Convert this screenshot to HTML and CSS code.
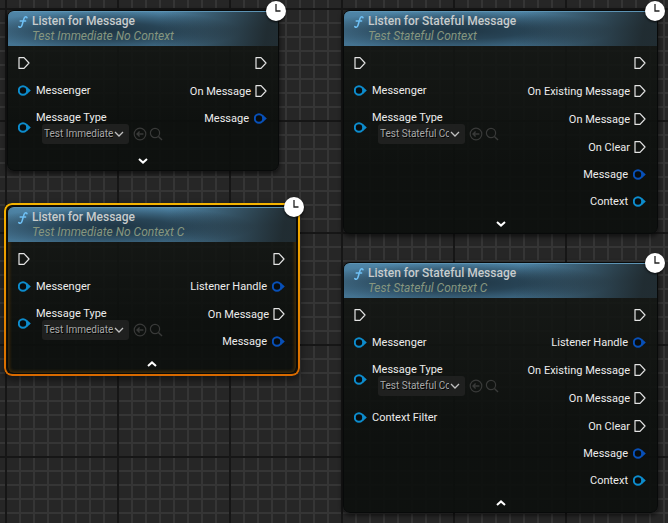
FILE: index.html
```
<!DOCTYPE html>
<html lang="en">
<head>
<meta charset="utf-8">
<title>Blueprint Graph</title>
<link rel="stylesheet" href="styles.css">
</head>
<body>
<svg class="defs" aria-hidden="true">
  <symbol id="exec" viewBox="0 0 12 12"><path d="M1 .6H6L11 6 6 11.4H1Z" fill="none" stroke="currentColor" stroke-width="1.2" stroke-linejoin="round"/></symbol>
  <symbol id="data" viewBox="0 0 13 12"><path d="M9 2 12.8 5.5 9 9Z" fill="currentColor"/><circle cx="5" cy="5.5" r="4.2" fill="#080c0e" stroke="currentColor" stroke-width="2"/></symbol>
  <symbol id="fn" viewBox="0 0 12 14"><path d="M10 2.8C9.6 1.2 7.7 1.5 7 3.6L5 10.2C4.4 12.2 3 12.8 1.8 11.6M3.2 6H8.6" fill="none" stroke="currentColor" stroke-width="1.5" stroke-linecap="round"/></symbol>
  <symbol id="clock" viewBox="0 0 22 22"><circle cx="11" cy="11" r="10" fill="#fff"/><path d="M11 4V11H15.5" fill="none" stroke="#222" stroke-width="1.3"/></symbol>
  <symbol id="down" viewBox="0 0 10 6"><path d="M1 1 5 5 9 1" fill="none" stroke="currentColor" stroke-width="1.3"/></symbol>
  <symbol id="fold" viewBox="0 0 10 6"><path d="M1 1 5 4.6 9 1" fill="none" stroke="currentColor" stroke-width="2"/></symbol>
  <symbol id="use" viewBox="0 0 14 14"><circle cx="7" cy="7" r="5.8" fill="none" stroke="currentColor" stroke-width="1.2"/><path d="M10.4 7H4M6.6 4.4 4 7l2.6 2.6" fill="none" stroke="currentColor" stroke-width="1.4"/></symbol>
  <symbol id="find" viewBox="0 0 14 14"><circle cx="6" cy="6" r="4.6" fill="none" stroke="currentColor" stroke-width="1.2"/><path d="M9.4 9.4 13 13" stroke="currentColor" stroke-width="1.4"/></symbol>
</svg>

<main class="graph">
  <article class="node node-a">
    <header class="head">
      <svg class="fn"><use href="#fn"/></svg>
      <div><h2>Listen for Message</h2><p>Test Immediate No Context</p></div>
    </header>
    <svg class="clock"><use href="#clock"/></svg>
    <div class="pins">
      <ul class="inputs">
        <li class="row exec"><svg class="pin"><use href="#exec"/></svg></li>
        <li class="row object"><svg class="pin"><use href="#data"/></svg><span>Messenger</span></li>
        <li class="row object typed"><svg class="pin"><use href="#data"/></svg>
          <div class="field"><label for="type-a">Message Type</label>
            <div class="picker"><span class="combo"><select id="type-a"><option>Test Immediate</option></select><svg><use href="#down"/></svg></span>
            <button aria-label="Use selected asset"><svg><use href="#use"/></svg></button><button aria-label="Browse"><svg><use href="#find"/></svg></button></div></div></li>
      </ul>
      <ul class="outputs">
        <li class="row exec"><svg class="pin"><use href="#exec"/></svg></li>
        <li class="row exec"><span>On Message</span><svg class="pin"><use href="#exec"/></svg></li>
        <li class="row struct"><span>Message</span><svg class="pin"><use href="#data"/></svg></li>
      </ul>
    </div>
    <button class="fold" aria-label="Expand"><svg><use href="#fold"/></svg></button>
  </article>

  <article class="node node-b selected">
    <header class="head">
      <svg class="fn"><use href="#fn"/></svg>
      <div><h2>Listen for Message</h2><p>Test Immediate No Context C</p></div>
    </header>
    <svg class="clock"><use href="#clock"/></svg>
    <div class="pins">
      <ul class="inputs">
        <li class="row exec"><svg class="pin"><use href="#exec"/></svg></li>
        <li class="row object"><svg class="pin"><use href="#data"/></svg><span>Messenger</span></li>
        <li class="row object typed"><svg class="pin"><use href="#data"/></svg>
          <div class="field"><label for="type-b">Message Type</label>
            <div class="picker"><span class="combo"><select id="type-b"><option>Test Immediate</option></select><svg><use href="#down"/></svg></span>
            <button aria-label="Use selected asset"><svg><use href="#use"/></svg></button><button aria-label="Browse"><svg><use href="#find"/></svg></button></div></div></li>
      </ul>
      <ul class="outputs">
        <li class="row exec"><svg class="pin"><use href="#exec"/></svg></li>
        <li class="row struct"><span>Listener Handle</span><svg class="pin"><use href="#data"/></svg></li>
        <li class="row exec"><span>On Message</span><svg class="pin"><use href="#exec"/></svg></li>
        <li class="row struct"><span>Message</span><svg class="pin"><use href="#data"/></svg></li>
      </ul>
    </div>
    <button class="fold open" aria-label="Collapse"><svg><use href="#fold"/></svg></button>
  </article>

  <article class="node node-c">
    <header class="head">
      <svg class="fn"><use href="#fn"/></svg>
      <div><h2>Listen for Stateful Message</h2><p>Test Stateful Context</p></div>
    </header>
    <svg class="clock"><use href="#clock"/></svg>
    <div class="pins">
      <ul class="inputs">
        <li class="row exec"><svg class="pin"><use href="#exec"/></svg></li>
        <li class="row object"><svg class="pin"><use href="#data"/></svg><span>Messenger</span></li>
        <li class="row object typed"><svg class="pin"><use href="#data"/></svg>
          <div class="field"><label for="type-c">Message Type</label>
            <div class="picker"><span class="combo"><select id="type-c"><option>Test Stateful Context</option></select><svg><use href="#down"/></svg></span>
            <button aria-label="Use selected asset"><svg><use href="#use"/></svg></button><button aria-label="Browse"><svg><use href="#find"/></svg></button></div></div></li>
      </ul>
      <ul class="outputs">
        <li class="row exec"><svg class="pin"><use href="#exec"/></svg></li>
        <li class="row exec"><span>On Existing Message</span><svg class="pin"><use href="#exec"/></svg></li>
        <li class="row exec"><span>On Message</span><svg class="pin"><use href="#exec"/></svg></li>
        <li class="row exec"><span>On Clear</span><svg class="pin"><use href="#exec"/></svg></li>
        <li class="row struct"><span>Message</span><svg class="pin"><use href="#data"/></svg></li>
        <li class="row object"><span>Context</span><svg class="pin"><use href="#data"/></svg></li>
      </ul>
    </div>
    <button class="fold" aria-label="Expand"><svg><use href="#fold"/></svg></button>
  </article>

  <article class="node node-d">
    <header class="head">
      <svg class="fn"><use href="#fn"/></svg>
      <div><h2>Listen for Stateful Message</h2><p>Test Stateful Context C</p></div>
    </header>
    <svg class="clock"><use href="#clock"/></svg>
    <div class="pins">
      <ul class="inputs">
        <li class="row exec"><svg class="pin"><use href="#exec"/></svg></li>
        <li class="row object"><svg class="pin"><use href="#data"/></svg><span>Messenger</span></li>
        <li class="row object typed"><svg class="pin"><use href="#data"/></svg>
          <div class="field"><label for="type-d">Message Type</label>
            <div class="picker"><span class="combo"><select id="type-d"><option>Test Stateful Context</option></select><svg><use href="#down"/></svg></span>
            <button aria-label="Use selected asset"><svg><use href="#use"/></svg></button><button aria-label="Browse"><svg><use href="#find"/></svg></button></div></div></li>
        <li class="row object"><svg class="pin"><use href="#data"/></svg><span>Context Filter</span></li>
      </ul>
      <ul class="outputs">
        <li class="row exec"><svg class="pin"><use href="#exec"/></svg></li>
        <li class="row struct"><span>Listener Handle</span><svg class="pin"><use href="#data"/></svg></li>
        <li class="row exec"><span>On Existing Message</span><svg class="pin"><use href="#exec"/></svg></li>
        <li class="row exec"><span>On Message</span><svg class="pin"><use href="#exec"/></svg></li>
        <li class="row exec"><span>On Clear</span><svg class="pin"><use href="#exec"/></svg></li>
        <li class="row struct"><span>Message</span><svg class="pin"><use href="#data"/></svg></li>
        <li class="row object"><span>Context</span><svg class="pin"><use href="#data"/></svg></li>
      </ul>
    </div>
    <button class="fold open" aria-label="Collapse"><svg><use href="#fold"/></svg></button>
  </article>
</main>
</body>
</html>
```
FILE: styles.css
```
* { box-sizing: border-box; margin: 0; padding: 0; }
body { font-family: Roboto, "Liberation Sans", sans-serif; font-size: 11px; color: #ececec; }
button { border: 0; background: none; color: inherit; display: flex; align-items: center; justify-content: center; }
ul { list-style: none; }
svg { display: block; flex: none; }
.defs { position: absolute; width: 0; height: 0; }

/* major grid lines every 112px, minor every 14px */
.graph {
  position: relative;
  min-height: 100vh;
  overflow: hidden;
  background-color: #262626;
  background-image:
    linear-gradient(90deg, #161616 2px, transparent 2px),
    linear-gradient(#161616 2px, transparent 2px),
    linear-gradient(90deg, #353535 2px, transparent 2px),
    linear-gradient(#353535 2px, transparent 2px);
  background-size: 112px 112px, 112px 112px, 14px 14px, 14px 14px;
  background-position: 5px 8px;
}

.node {
  position: absolute;
  border: 1px solid #080a0a;
  border-radius: 7px;
  background: linear-gradient(rgba(21, 24, 21, .88), rgba(12, 15, 13, .92) 70%);
  box-shadow: 0 2px 4px 1px rgba(0, 0, 0, .5);
}
.node-a { left: 7px; top: 10px; width: 272px; }
.node-b { left: 7px; top: 206px; width: 290px; }
.node-c { left: 343px; top: 10px; width: 315px; }
.node-d { left: 343px; top: 262px; width: 315px; }

.selected::after {
  content: "";
  position: absolute;
  inset: -4px -4px -3px;
  border-radius: 8px;
  padding: 2px;
  background: linear-gradient(#f5b400, #d86a00);
  mask: linear-gradient(#000 0 0) content-box exclude, linear-gradient(#000 0 0);
  pointer-events: none;
}
.selected { box-shadow: 0 3px 6px 4px rgba(0, 0, 0, .4), 0 0 0 2px #1c1506, inset 0 0 3px 2px rgba(120, 75, 0, .4); }

.head {
  display: flex;
  gap: 3px;
  height: 35px;
  padding: 2px 9px;
  border-radius: 6px 6px 0 0;
  border-top: 1px solid #5d93b3;
  background:
    linear-gradient(100deg, transparent 55%, rgba(29, 37, 40, .9) 95%),
    radial-gradient(ellipse 48% 60% at 38% 55%, rgba(30, 52, 66, .95), rgba(30, 52, 66, .75) 40%, rgba(30, 52, 66, 0)),
    linear-gradient(#4f86a8, #44718e 50%, #447391);
}
.head .fn { width: 12px; height: 14px; margin-top: 1px; color: #6fc0f4; }
.head h2 { font-size: 12px; line-height: 14px; font-weight: 500; color: #c8cccd; }
.head p { font-size: 12px; line-height: 16px; font-style: italic; color: #86967f; }
.clock { position: absolute; z-index: 1; width: 22px; height: 22px; right: -9px; top: -11px; filter: drop-shadow(0 1px 1px rgba(0, 0, 0, .8)); }

.pins { display: flex; justify-content: space-between; padding: 3px 11px 0 10px; }
.row { display: flex; align-items: center; gap: 5px; height: 27px; }
.row.exec { height: 28px; gap: 4px; }
.outputs .row { justify-content: flex-end; }
.pin { width: 13px; height: 12px; color: #e4e4e4; }
.exec .pin { width: 12px; }
.object .pin { color: #0d8ccd; }
.struct .pin { color: #0850b8; }
.row.typed { height: 48px; }
.field { padding: 7px 0 8px; }
.field label { display: block; line-height: 13px; }
.picker { display: flex; align-items: center; gap: 2px; padding-left: 6px; }
.combo { position: relative; width: 87px; height: 20px; margin-right: 2px; }
.combo select {
  appearance: none;
  width: 100%;
  height: 20px;
  padding: 0 16px 0 2px;
  border: 0;
  border-radius: 3px;
  background: #1f201f;
  color: #a8a8a8;
  font: 10px/20px Roboto, "Liberation Sans", sans-serif;
  text-shadow: 1px 1px 0 #000;
}
.combo svg { position: absolute; right: 5px; top: 7px; width: 10px; height: 6px; color: #c0c0c0; pointer-events: none; }
.picker button { color: #393a39; }
.picker button svg { width: 14px; height: 14px; }

.fold { width: 100%; height: 18px; color: #fff; }
.fold svg { width: 10px; height: 6px; }
.fold.open svg { transform: rotate(180deg); }
```
